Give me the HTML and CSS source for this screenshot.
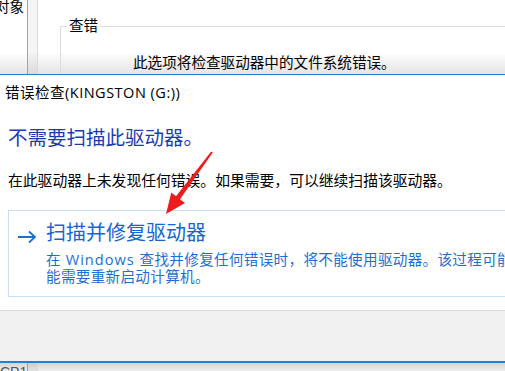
FILE: index.html
```html
<!DOCTYPE html>
<html lang="zh-CN">
<head>
  <meta charset="UTF-8">
  <meta name="viewport" content="width=device-width, initial-scale=1.0">
  <title>错误检查</title>
  <link rel="stylesheet" href="styles.css">
</head>
<body>
  <div class="screen">
    <div class="back-top">
      <div class="side"><span class="side-text">对象</span></div>
      <div class="splitter"></div>
      <div class="panel">
        <fieldset class="group">
          <legend>查错</legend>
          <p class="group-text">此选项将检查驱动器中的文件系统错误。</p>
        </fieldset>
      </div>
    </div>

    <div class="dialog">
      <div class="dialog-title">错误检查(KINGSTON (G:))</div>
      <h1 class="instruction">不需要扫描此驱动器。</h1>
      <p class="content">在此驱动器上未发现任何错误。如果需要，可以继续扫描该驱动器。</p>

      <div class="command-link">
        <svg class="cl-arrow" width="20" height="14" viewBox="0 0 20 14">
          <path d="M1 7 H18 M12 1.5 L18 7 L12 12.5" fill="none" stroke="#1a6fd3" stroke-width="1.8"/>
        </svg>
        <div class="cl-body">
          <div class="cl-title">扫描并修复驱动器</div>
          <div class="cl-note">在<span class="latin"> Windows </span>查找并修复任何错误时，将不能使用驱动器。该过程可能需要几分钟，也可</div>
          <div class="cl-note">能需要重新启动计算机。</div>
        </div>
      </div>
    </div>

    <div class="footer"></div>

    <div class="back-bottom">
      <div class="side"><span class="side-text small">CP1</span></div>
      <div class="splitter"></div>
      <div class="panel"></div>
    </div>

    <svg class="annotation" width="505" height="371" viewBox="0 0 505 371">
      <polygon points="166,214 171.3,192.6 176,196.2 211.2,151.4 212.8,152.6 180,199.2 185,203" fill="#ee1c1c"/>
    </svg>
  </div>
</body>
</html>
```

FILE: styles.css
```css
body {
  margin: 0;
  padding: 0;
  background-color: #fff;
  font-family: "Open Sans", "Noto Sans CJK SC", sans-serif;
  color: #000;
}

.screen {
  position: relative;
  width: 505px;
  height: 371px;
  overflow: hidden;
}

/* window behind the dialog */
.back-top {
  display: flex;
  height: 74px;
  overflow: hidden;
  background: linear-gradient(#fff 0, #fff 70%, #e4e4e4 100%);
  border-bottom: 1px solid #1a7fd6;
}

.side {
  width: 27px;
  overflow: hidden;
}

.side-text {
  display: block;
  margin-left: -5px;
  margin-top: -2px;
  font-size: 14.5px;
  line-height: 18px;
  white-space: nowrap;
}

.splitter {
  width: 9px;
  border-left: 1px solid #a3a3a3;
  border-right: 1px solid #dadada;
  background-color: rgba(0, 0, 0, 0.04);
}

.panel {
  flex: 1;
  padding: 17px 0 0 22px;
}

.group {
  margin: 0;
  padding: 0 0 0 6px;
  border: 1px solid #dcdcdc;
  border-right: none;
  border-bottom: none;
  height: 80px;
}

.group legend {
  padding: 0 2px;
  font-size: 14.5px;
  line-height: 18px;
}

.group-text {
  margin: 18px 0 0 66px;
  font-size: 14.6px;
  line-height: 18px;
  white-space: nowrap;
}

/* dialog */
.dialog {
  height: 235px;
  padding: 8px 0 0 0;
  box-sizing: border-box;
  overflow: hidden;
}

.dialog-title {
  padding-left: 5px;
  font-size: 14.5px;
  line-height: 20px;
  letter-spacing: 0.5px;
  white-space: nowrap;
}

.instruction {
  margin: 22px 0 0 8px;
  font-size: 19.5px;
  font-weight: normal;
  line-height: 26px;
  color: #1b3bb3;
}

.content {
  margin: 19px 0 0 8px;
  font-size: 14.8px;
  line-height: 20px;
  white-space: nowrap;
}

.command-link {
  display: flex;
  margin: 20px 0 0 8px;
  height: 87px;
  box-sizing: border-box;
  padding: 9px 0 0 8px;
  border: 1px solid #c6dff3;
  border-right: none;
}

.cl-arrow {
  margin-top: 10px;
  flex-shrink: 0;
}

.cl-body {
  margin-left: 9px;
  min-width: 0;
  overflow: hidden;
}

.cl-title {
  font-size: 20px;
  line-height: 26px;
  color: #1565d6;
  white-space: nowrap;
}

.cl-note {
  font-size: 14.6px;
  line-height: 17px;
  letter-spacing: 0.3px;
  color: #1e6fd2;
  white-space: nowrap;
}

.cl-note .latin {
  letter-spacing: 1px;
}

.cl-title + .cl-note {
  margin-top: 5px;
}

.footer {
  height: 50px;
  background-color: #f0f0f0;
  border-top: 1px solid #dadada;
  border-bottom: 2px solid #1a84dc;
}

.back-bottom {
  display: flex;
  height: 8px;
  overflow: hidden;
  background: linear-gradient(#d6d6d6, #ececec);
}

.back-bottom .side-text.small {
  margin-left: 0;
  margin-top: 0;
  font-family: "Liberation Sans", sans-serif;
  font-size: 14px;
  color: #555;
}

.annotation {
  position: absolute;
  top: 0;
  left: 0;
  pointer-events: none;
}
```
